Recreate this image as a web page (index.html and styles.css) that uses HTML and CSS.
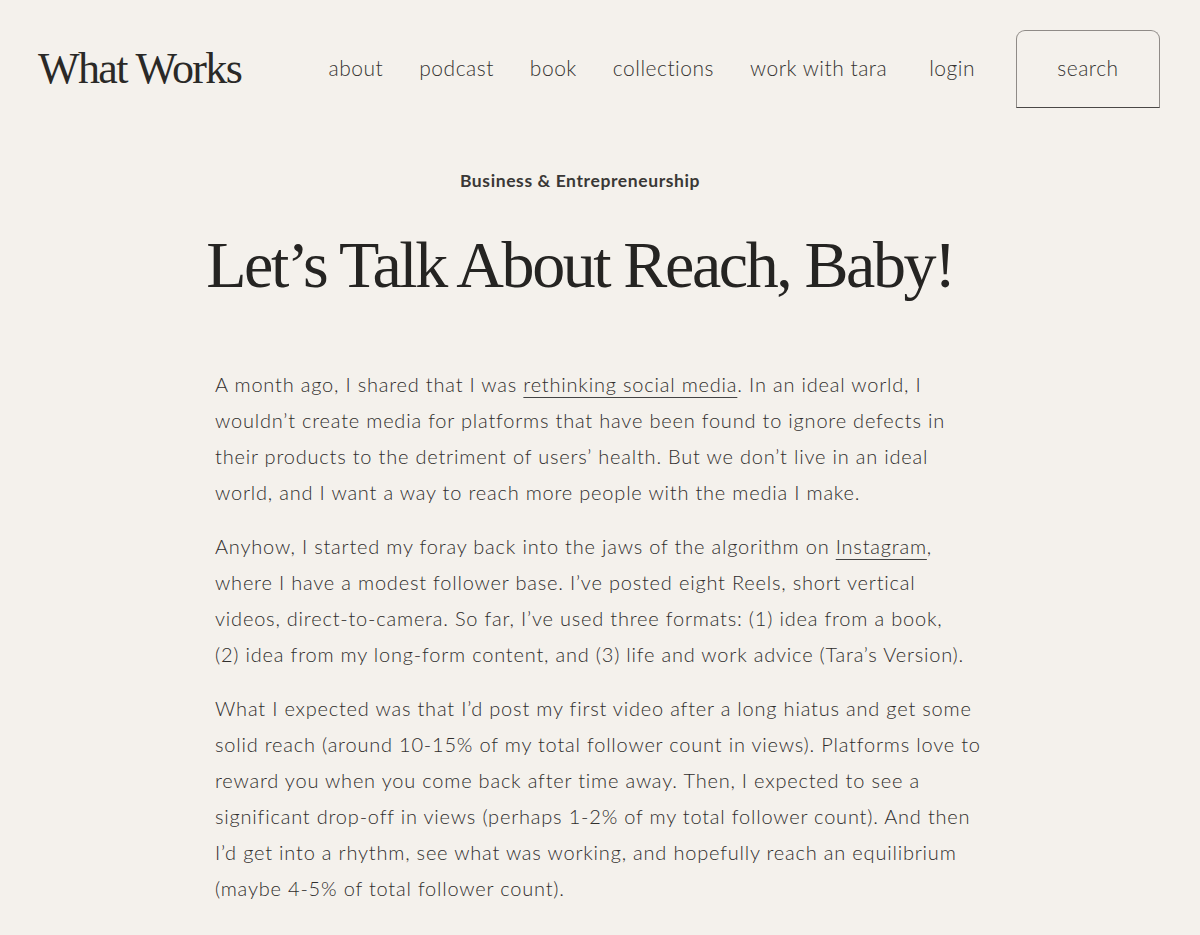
FILE: index.html
```html
<!DOCTYPE html>
<html lang="en">
<head>
<meta charset="utf-8">
<title>Let’s Talk About Reach, Baby! — What Works</title>
<link rel="stylesheet" href="styles.css">
</head>
<body>
<header class="site-header">
  <a class="logo" href="#">What Works</a>
  <nav class="nav">
    <a href="#">about</a>
    <a href="#">podcast</a>
    <a href="#">book</a>
    <a href="#">collections</a>
    <a href="#">work with tara</a>
    <a class="login" href="#">login</a>
    <button class="search">search</button>
  </nav>
</header>
<main class="article">
  <div class="article-head">
    <div class="category">Business &amp; Entrepreneurship</div>
    <h1 class="title">Let’s Talk About Reach, Baby!</h1>
  </div>
  <div class="body">
    <p>A month ago, I shared that I was <a href="#">rethinking social media</a>. In an ideal world, I wouldn’t create media for platforms that have been found to ignore defects in their products to the detriment of users’ health. But we don’t live in an ideal world, and I want a way to reach more people with the media I make.</p>
    <p>Anyhow, I started my foray back into the jaws of the algorithm on <a href="#">Instagram</a>, where I have a modest follower base. I’ve posted eight Reels, short vertical videos, direct-to-camera. So far, I’ve used three formats: (1) idea from a book, (2)&nbsp;idea from my long-form content, and (3) life and work advice (Tara’s Version).</p>
    <p>What I expected was that I’d post my first video after a long hiatus and get some solid reach (around 10-15% of my total follower count in views). Platforms love to reward you when you come back after time away. Then, I expected to see a significant drop-off in views (perhaps 1-2% of my total follower count). And then I’d get into a rhythm, see what was working, and hopefully reach an equilibrium (maybe 4-5% of total follower count).</p>
  </div>
</main>
</body>
</html>
```

FILE: styles.css
```css
html, body {
  margin: 0;
  padding: 0;
  background: #f4f1ec;
}
body {
  color: #444240;
  font-family: "Lato", "Liberation Sans", sans-serif;
}
a { color: inherit; text-decoration: none; }

.site-header {
  display: flex;
  align-items: center;
  justify-content: space-between;
  padding: 30px 40px 0 38px;
  height: 78px;
}
.logo {
  font-family: "Liberation Serif", serif;
  font-size: 44px;
  letter-spacing: -1.6px;
  color: #2a2927;
  line-height: 1;
}
.nav {
  display: flex;
  align-items: center;
  font-size: 21px;
  font-weight: 300;
  letter-spacing: 0.5px;
  color: #363432;
}
.nav a { margin-left: 36px; position: relative; top: -2px; }
.nav a.login { margin-left: 42px; }
.search {
  margin-left: 41px;
  width: 144px;
  height: 78px;
  background: transparent;
  border: 1px solid #8f8b87;
  border-bottom-color: #4a4846;
  border-radius: 9px 9px 0 0;
  font-family: inherit;
  font-size: 21px;
  font-weight: 300;
  letter-spacing: 0.5px;
  color: #363432;
  padding: 0 0 4px;
}

.article {
  width: 770px;
  margin-left: 215px;
}
.article-head {
  width: 730px;
  text-align: center;
}
.category {
  margin-top: 61px;
  font-size: 17.5px;
  font-weight: 700;
  letter-spacing: 0.6px;
  color: #3a3836;
  line-height: 24px;
}
.title {
  margin: 36px -100px 0;
  white-space: nowrap;
  font-family: "Liberation Serif", serif;
  font-weight: 400;
  font-size: 66px;
  letter-spacing: -2.4px;
  line-height: 72px;
  color: #252422;
}
.body {
  margin-top: 65px;
  font-size: 20px;
  font-weight: 300;
  letter-spacing: 0.8px;
  line-height: 36px;
  color: #302e2c;
}
.body p { margin: 0 0 18px; }
.body a {
  text-decoration: underline;
  text-decoration-color: #444;
  text-underline-offset: 5px;
  text-decoration-thickness: 1px;
}
```
